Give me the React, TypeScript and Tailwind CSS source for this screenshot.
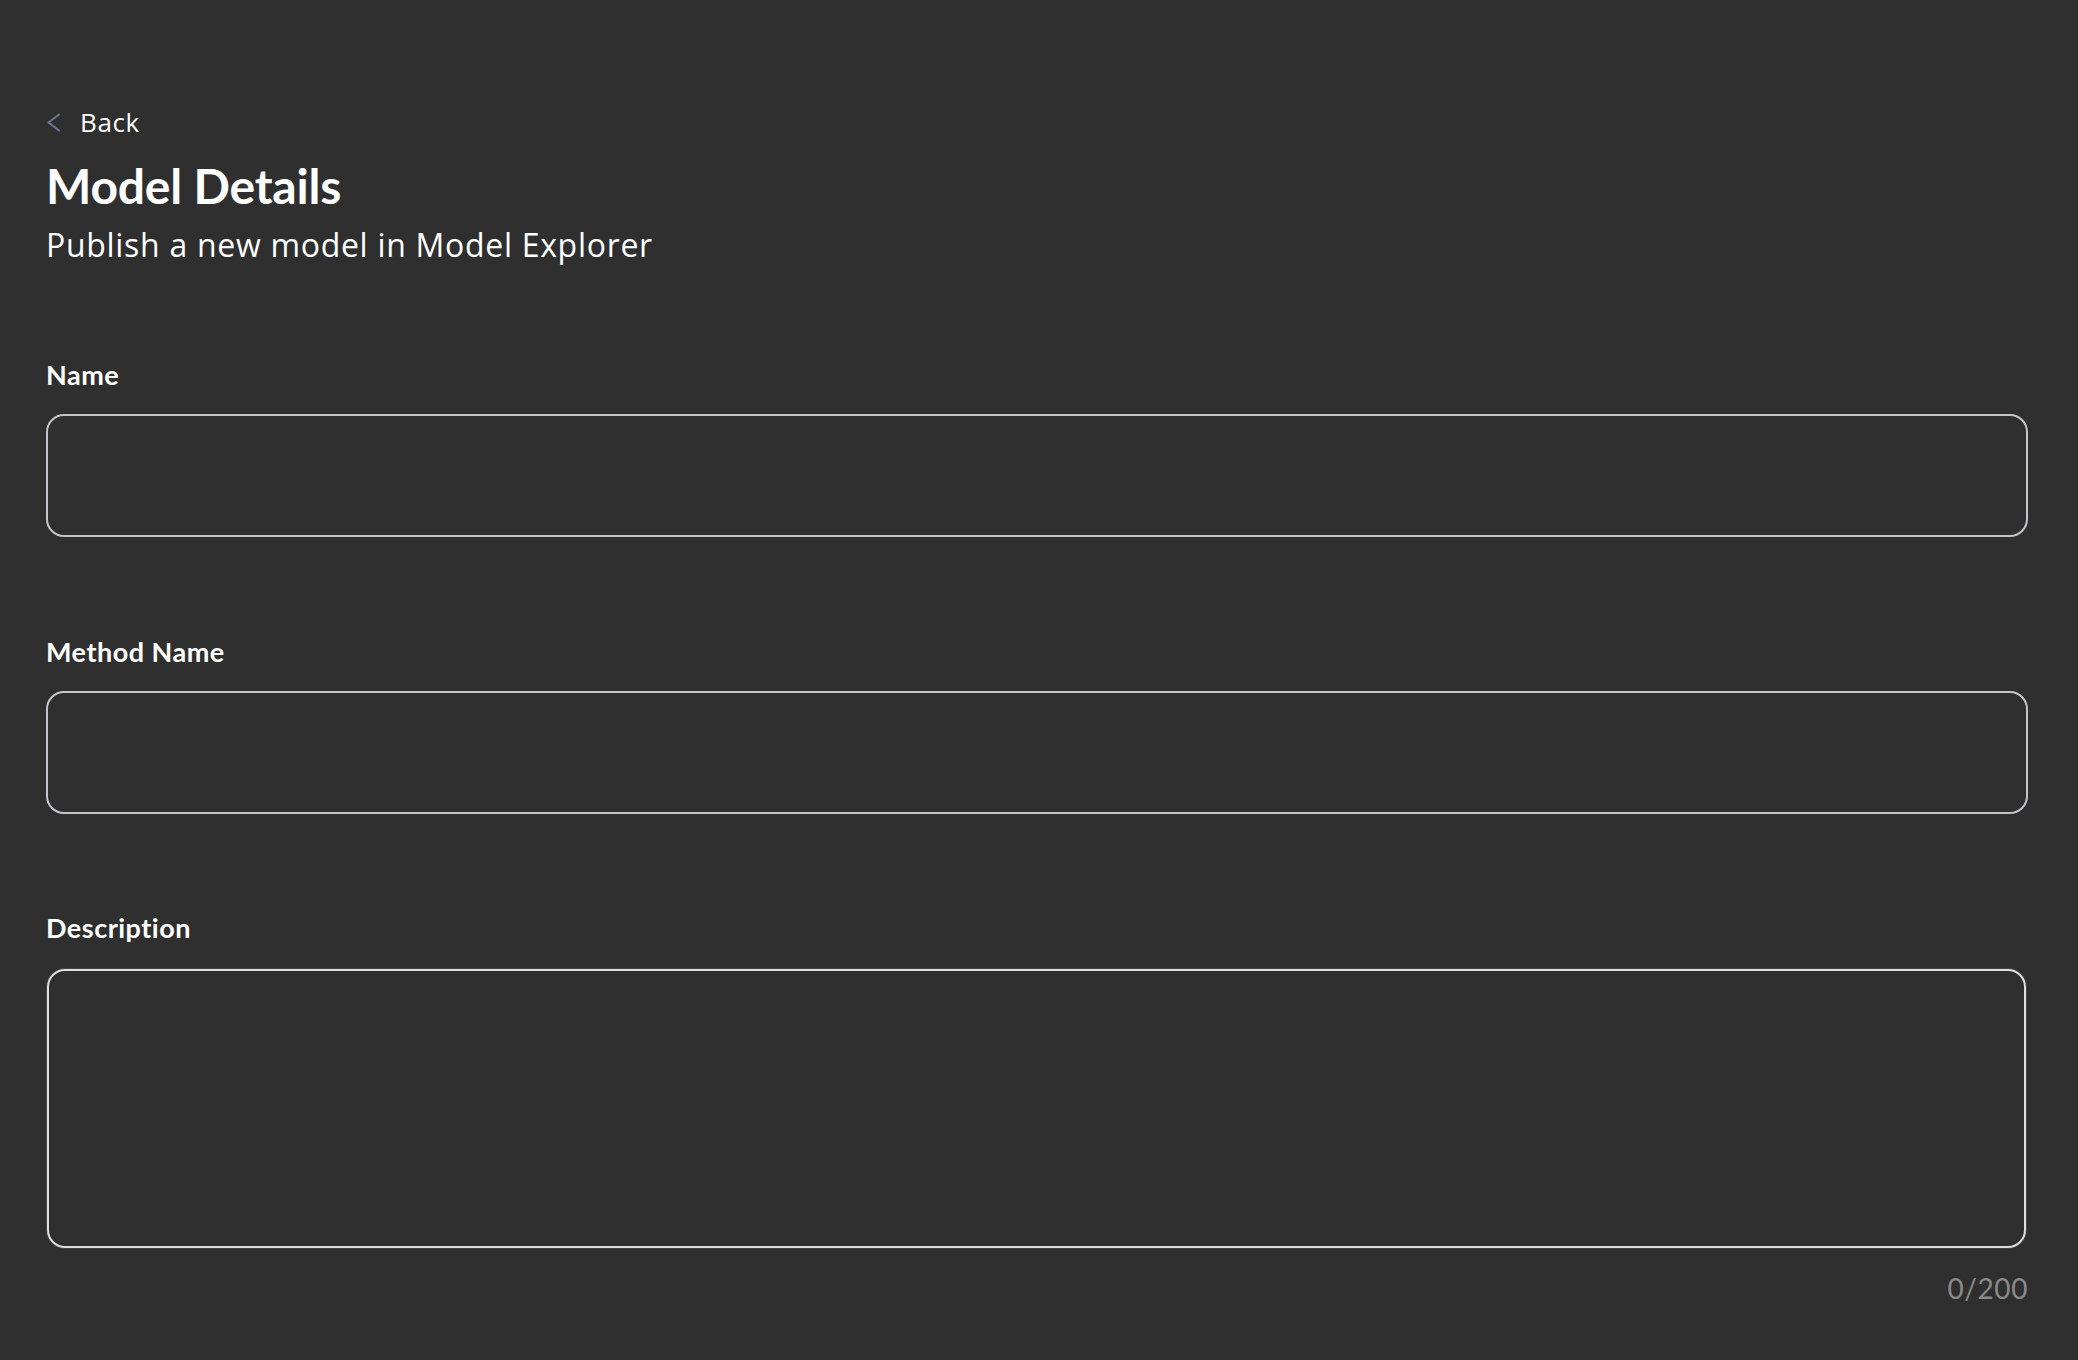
import { useState } from "react";

const lato = { fontFamily: '"Lato", "Open Sans", sans-serif' };
const openSans = { fontFamily: '"Open Sans", "Lato", sans-serif' };

const Field = ({ label, className }: { label: string; className: string }) => (
  <div className={`flex flex-col ${className}`}>
    <label className="text-[27px] leading-none font-bold text-white tracking-[0.5px]">{label}</label>
    <input
      type="text"
      className="mt-[26px] h-[123px] w-full rounded-[18px] border-2 border-[#c4c5ca] bg-transparent px-5 text-[26px] text-white outline-none"
    />
  </div>
);

export default function App() {
  const [description, setDescription] = useState("");

  return (
    <div className="min-h-screen w-full bg-[#2f2f2f] pl-[46px] pr-[50px] pt-[109px] pb-10" style={lato}>
      {/* Back link */}
      <button className="flex items-center gap-[19px] text-white">
        <svg width="15" height="19" viewBox="0 0 15 19" fill="none">
          <polyline points="13,1.5 2.5,9.5 13,17.5" stroke="#6f6f98" strokeWidth="2.2" strokeLinecap="round" strokeLinejoin="round" />
        </svg>
        <span className="text-[26px] leading-none tracking-[0.6px]" style={openSans}>Back</span>
      </button>

      {/* Header */}
      <h1 className="mt-[27px] text-[48px] leading-none font-bold text-white tracking-[-0.2px]">Model Details</h1>
      <p className="mt-[19px] text-[32px] leading-none text-white tracking-[0.7px]" style={openSans}>
        Publish a new model in Model Explorer
      </p>

      {/* Form */}
      <Field label="Name" className="mt-[100px]" />
      <Field label="Method Name" className="mt-[101px]" />

      <div className="mt-[100px] flex flex-col">
        <label className="text-[27px] leading-none font-bold text-white tracking-[0.5px]">Description</label>
        <textarea
          value={description}
          maxLength={200}
          onChange={(e) => setDescription(e.target.value)}
          className="mt-[28px] mx-px h-[279px] w-[calc(100%-3px)] resize-none rounded-[18px] border-2 border-[#dedee0] bg-transparent px-5 py-4 text-[26px] text-white outline-none shadow-[0_0_0_1px_#444]"
        />
        <div className="mt-[26px] self-end text-[28px] leading-none text-[#8a8a8a] tracking-[0.6px]">
          {description.length}/200
        </div>
      </div>
    </div>
  );
}
